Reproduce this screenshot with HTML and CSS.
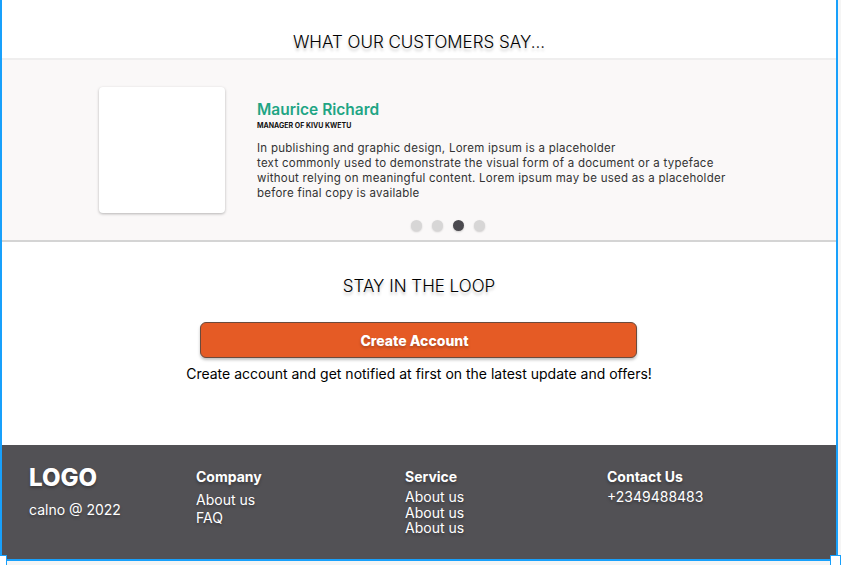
FILE: index.html
```html
<!DOCTYPE html>
<html>
<head>
<meta charset="utf-8">
<link rel="stylesheet" href="styles.css">
</head>
<body>
<div class="frame">
  <section class="testimonials">
    <h2 class="section-title">WHAT OUR CUSTOMERS SAY...</h2>
    <div class="band">
      <div class="testimonial">
        <div class="photo"></div>
        <div class="quote">
          <h3 class="name">Maurice Richard</h3>
          <div class="role">MANAGER OF KIVU KWETU</div>
          <p class="text">In publishing and graphic design, Lorem ipsum is a placeholder<br>text commonly used to demonstrate the visual form of a document or a typeface without relying on meaningful content. Lorem ipsum may be used as a placeholder before final copy is available</p>
        </div>
      </div>
      <div class="dots">
        <span class="dot"></span>
        <span class="dot"></span>
        <span class="dot active"></span>
        <span class="dot"></span>
      </div>
    </div>
  </section>
  <section class="loop">
    <h2 class="section-title loop-title">STAY IN THE LOOP</h2>
    <button class="cta">Create Account</button>
    <p class="caption">Create account and get notified at first on the latest update and offers!</p>
  </section>
  <footer class="footer">
    <div class="col brand">
      <div class="logo">LOGO</div>
      <div class="copy">calno @ 2022</div>
    </div>
    <div class="col company">
      <div class="col-title">Company</div>
      <div class="links loose">
        <span>About us</span>
        <span>FAQ</span>
      </div>
    </div>
    <div class="col service">
      <div class="col-title">Service</div>
      <div class="links tight">
        <span>About us</span>
        <span>About us</span>
        <span>About us</span>
      </div>
    </div>
    <div class="col contact">
      <div class="col-title">Contact Us</div>
      <div class="links tight">
        <span>+2349488483</span>
      </div>
    </div>
  </footer>
  <span class="handle handle-left"></span>
  <span class="handle handle-right"></span>
</div>
</body>
</html>
```
FILE: styles.css
```css
* { box-sizing: border-box; }
html, body { margin: 0; padding: 0; }
body {
  background: #f5f5f5;
  font-family: Inter, "Noto Sans", sans-serif;
  color: #000;
  height: 565px;
  overflow: hidden;
}
.frame {
  position: relative;
  width: 838px;
  background: #fff;
  border-left: 2px solid #18a0fb;
  border-right: 2px solid #18a0fb;
  border-bottom: 2px solid #18a0fb;
}
.section-title {
  margin: 0;
  font-weight: 300;
  font-size: 17px;
  line-height: 22px;
  text-align: center;
  text-shadow: 0 3px 3px rgba(0,0,0,0.22);
  color: #000;
}
.testimonials { padding-top: 31px; }
.band {
  margin-top: 5px;
  background: #faf8f8;
  border-top: 2px solid #efeeee;
  border-bottom: 2px solid #d4d4d4;
  height: 184px;
  padding: 27px 0 0 97px;
}
.testimonial { display: flex; gap: 32px; }
.photo {
  width: 126px;
  height: 126px;
  background: #fff;
  border-radius: 4px;
  box-shadow: 0 1px 3px rgba(0,0,0,0.28);
  flex: none;
}
.quote { padding-top: 14px; width: 480px; }
.name {
  margin: 0;
  font-size: 15.5px;
  font-weight: 600;
  line-height: 18px;
  color: #1fa584;
}
.role {
  margin-top: 3px;
  font-size: 7px;
  font-weight: 700;
  line-height: 8px;
  color: #111;
}
.text {
  margin: 11px 0 0;
  font-size: 11.5px;
  letter-spacing: 0.26px;
  line-height: 15px;
  color: #333;
}
.dots {
  display: flex;
  gap: 10px;
  margin-top: 7px;
  margin-left: 312px;
}
.dot {
  width: 11px;
  height: 11px;
  border-radius: 50%;
  background: #d7d6d6;
  box-shadow: 0 1px 2px rgba(0,0,0,0.18);
}
.dot.active { background: #4b4a4f; }
.loop {
  height: 203px;
  padding-top: 33px;
  text-align: center;
}
.cta {
  display: block;
  margin: 25px 0 0 198px;
  width: 437px;
  height: 36px;
  padding: 0 8px 0 0;
  background: #e55b25;
  color: #fff;
  border: 1px solid #6b4a3c;
  border-radius: 6px;
  box-shadow: 0 2px 3px rgba(0,0,0,0.25);
  font-family: Inter, sans-serif;
  font-weight: 800;
  font-size: 14px;
  text-shadow: 0 2px 3px rgba(0,0,0,0.25);
}
.caption {
  margin: 7px 0 0;
  font-size: 14px;
  line-height: 18px;
  color: #000;
}
.footer {
  background: #525155;
  height: 114px;
  display: flex;
  color: #fff;
  padding: 20px 0 0 27px;
  text-shadow: 0 2px 3px rgba(0,0,0,0.3);
}
.col { flex: none; }
.brand { width: 167px; }
.company { width: 209px; padding-top: 3px; }
.service { width: 202px; padding-top: 3px; }
.contact { padding-top: 3px; }
.logo {
  font-size: 24px;
  font-weight: 800;
  line-height: 26px;
}
.copy {
  margin-top: 10px;
  font-size: 14px;
  line-height: 18px;
}
.col-title {
  font-size: 14px;
  font-weight: 700;
  line-height: 18px;
}
.links { display: flex; flex-direction: column; font-size: 14px; }
.links.loose { line-height: 18px; margin-top: 5px; }
.links.tight { line-height: 15.5px; margin-top: 3px; }
.handle {
  position: absolute;
  width: 11px;
  height: 11px;
  background: #fff;
  border: 1px solid #18a0fb;
  bottom: -7px;
}
.handle-left { left: -6px; }
.handle-right { right: -5px; }
```
